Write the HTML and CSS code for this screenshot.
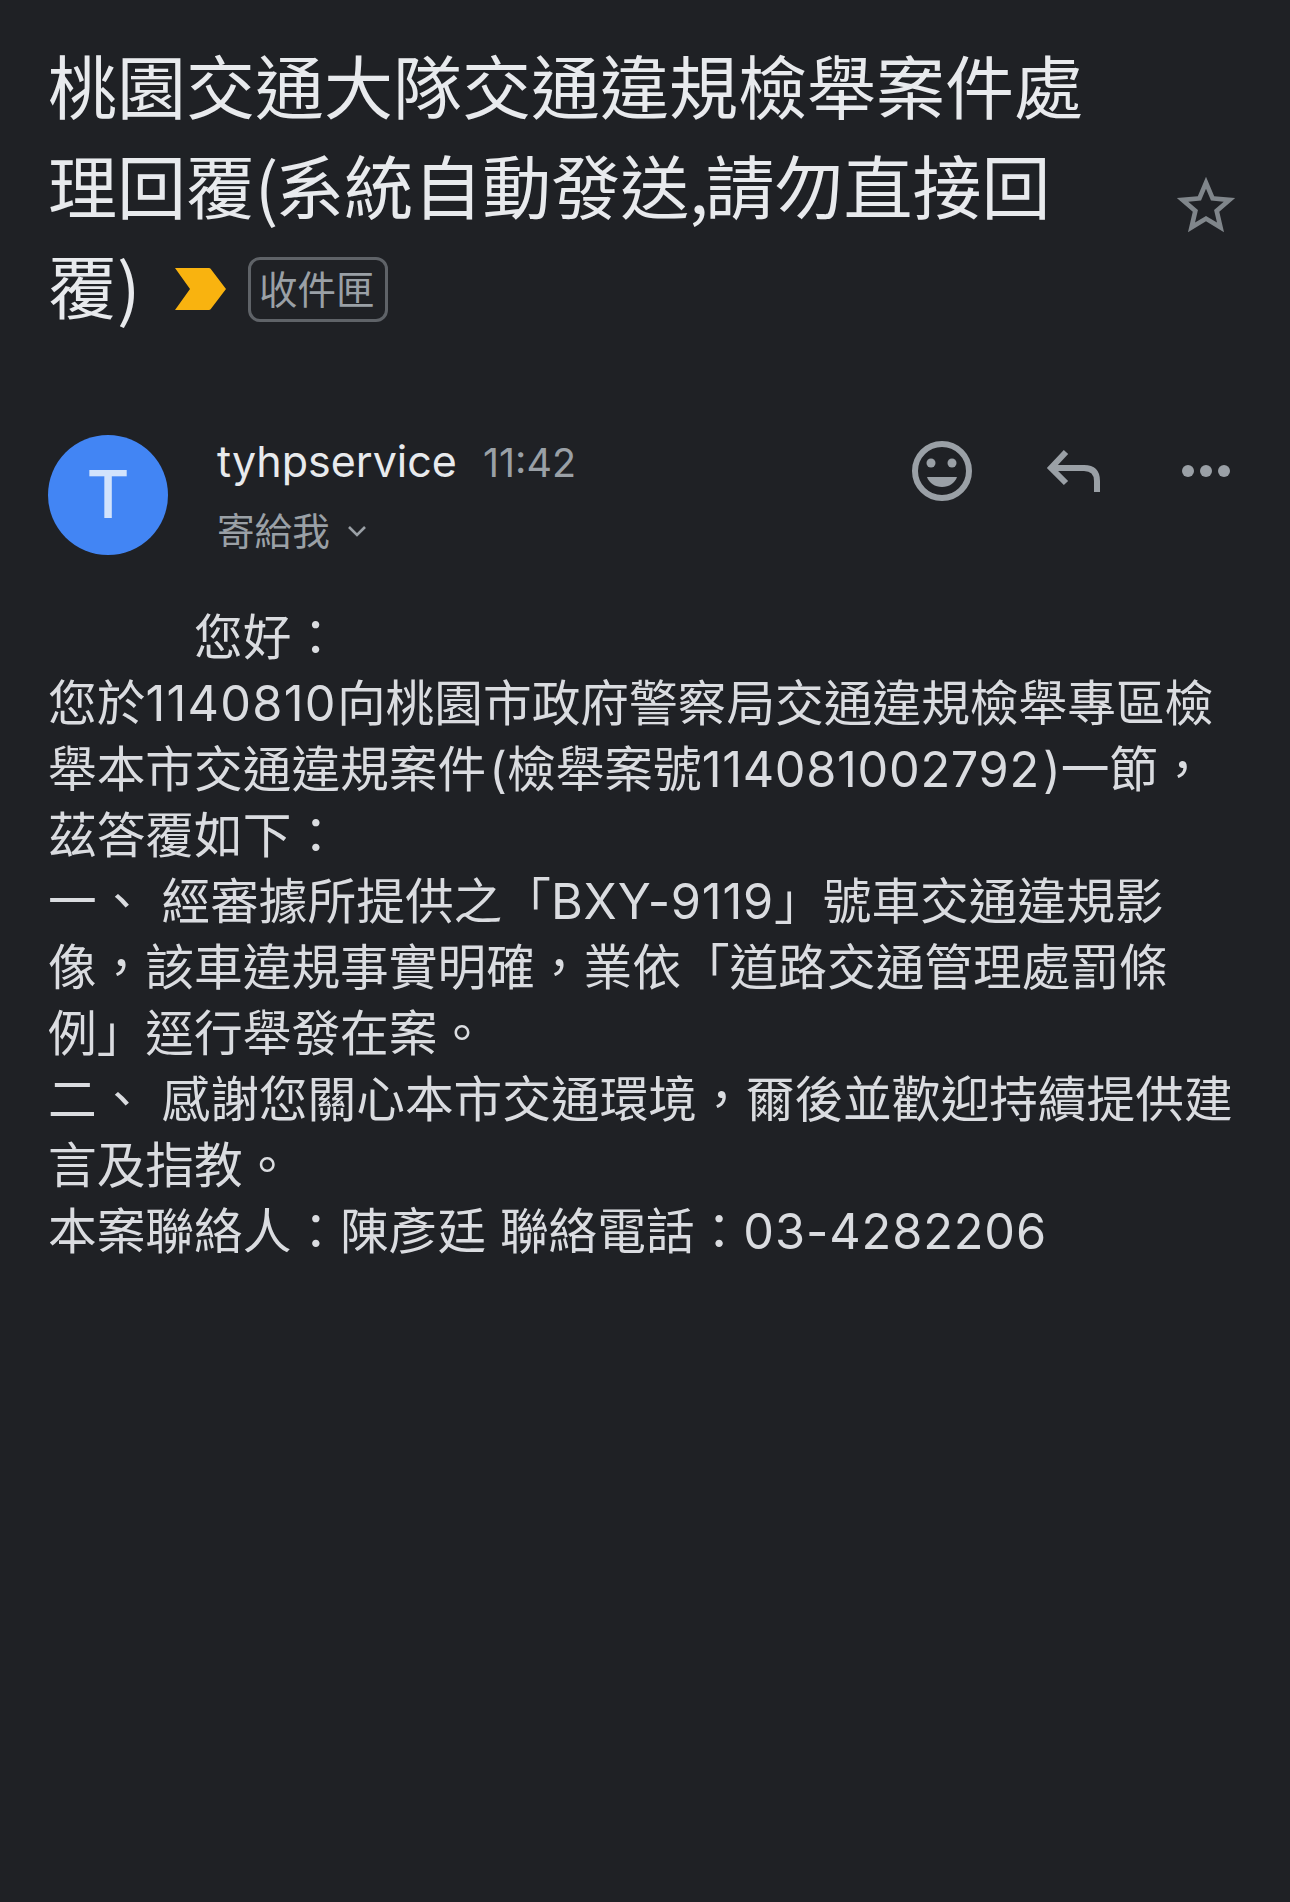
FILE: index.html
```html
<!DOCTYPE html>
<html lang="zh-Hant">
<head>
<meta charset="utf-8">
<title>桃園交通大隊交通違規檢舉案件處理回覆</title>
<link rel="stylesheet" href="styles.css">
</head>
<body>
<main class="mail">
  <header class="subject">
    <h1 class="subject-text">
      <span class="subject-line">桃園交通大隊交通違規檢舉案件處</span>
      <span class="subject-line">理回覆<span class="tight">(</span>系統自動發送<span class="tight">,</span>請勿直接回</span>
      <span class="subject-line subject-last">覆)
        <svg class="marker" width="51" height="42" viewBox="0 0 51 42"><path fill="#f9b30f" d="M0 0H34a2 2 0 0 1 1.6.8L51 21 35.6 41.2a2 2 0 0 1-1.6.8H0L15 21Z"/></svg>
        <span class="chip">收件匣</span>
      </span>
    </h1>
    <svg class="star" width="70" height="70" viewBox="0 0 24 24"><path fill="#80868b" d="M22 9.24l-7.19-.62L12 2 9.19 8.63 2 9.24l5.46 4.73L5.82 21 12 17.27 18.18 21l-1.63-7.03L22 9.24zM12 15.4l-3.76 2.27 1-4.28-3.32-2.88 4.38-.38L12 6.1l1.71 4.04 4.38.38-3.32 2.88 1 4.28L12 15.4z"/></svg>
  </header>

  <section class="sender">
    <div class="avatar">T</div>
    <div class="sender-info">
      <div class="sender-top"><span class="name">tyhpservice</span><span class="time">11:42</span></div>
      <div class="sender-to"><span>寄給我</span>
        <svg class="caret" width="20" height="12" viewBox="0 0 20 12"><path fill="none" stroke="#9aa0a6" stroke-width="2.6" d="M2 2l8 8 8-8"/></svg>
      </div>
    </div>
    <div class="actions">
      <svg width="72" height="72" viewBox="0 0 72 72"><circle cx="36" cy="36" r="27" fill="none" stroke="#9aa0a6" stroke-width="6"/><circle cx="25" cy="28" r="4.5" fill="#9aa0a6"/><circle cx="46" cy="28" r="4.5" fill="#9aa0a6"/><path fill="#9aa0a6" d="M21 42H51C49 48 43 52 36 52 29 52 23 48 21 42Z"/></svg>
      <svg width="72" height="72" viewBox="0 0 72 72"><path fill="none" stroke="#9aa0a6" stroke-width="6" d="M28 17L13 33 28 48M13 33H46Q59 33 59 46V57"/></svg>
      <svg width="72" height="72" viewBox="0 0 72 72"><circle cx="18" cy="36" r="6" fill="#9aa0a6"/><circle cx="36" cy="36" r="6" fill="#9aa0a6"/><circle cx="54" cy="36" r="6" fill="#9aa0a6"/></svg>
    </div>
  </section>

  <article class="body-text">
    <p class="greeting">您好：</p>
    <p>您於<span class="date-no">1140810</span>向桃園市政府警察局交通違規檢舉專區檢</p>
    <p>舉本市交通違規案件<span class="paren">(</span>檢舉案號<span class="case-no">114081002792</span><span class="paren">)</span>一節，</p>
    <p>茲答覆如下：</p>
    <p><span class="item-no">一、 </span>經審據所提供之「<span class="plate">BXY-9119</span>」號車交通違規影</p>
    <p>像，該車違規事實明確，業依「道路交通管理處罰條</p>
    <p>例」逕行舉發在案。</p>
    <p><span class="item-no">二、 </span>感謝您關心本市交通環境，爾後並歡迎持續提供建</p>
    <p>言及指教。</p>
    <p>本案聯絡人：陳彥廷 聯絡電話：<span class="phone">03-4282206</span></p>
  </article>
</main>
</body>
</html>
```

FILE: styles.css
```css
* { box-sizing: border-box; }

html, body {
  margin: 0;
  padding: 0;
  background: #1f2125;
}

body {
  font-family: Inter, "Noto Sans CJK TC", sans-serif;
}

.mail {
  height: 1902px;
  overflow: hidden;
  background: #1f2125;
}

.subject {
  display: flex;
  justify-content: space-between;
  padding: 34px 49px 0 48px;
}

.subject-text {
  margin: 0;
  font-size: 69px;
  font-weight: 400;
  line-height: 100px;
  color: #e8eaed;
  font-family: "Noto Sans CJK TC", sans-serif;
}

.subject-line {
  display: block;
  white-space: nowrap;
}

.tight {
  letter-spacing: -3px;
}

.subject-last {
  display: flex;
  align-items: center;
}

.marker {
  margin-left: 35px;
  margin-top: 10px;
}

.chip {
  margin-left: 22px;
  margin-top: 10px;
  width: 140px;
  height: 65px;
  border: 3px solid #5f6368;
  border-radius: 12px;
  padding-right: 3px;
  font-size: 38.5px;
  line-height: 54px;
  text-align: center;
  color: #9aa0a6;
}

.star {
  margin-top: 137px;
  flex: none;
}

.sender {
  display: flex;
  margin-top: 101px;
  padding: 0 48px;
}

.avatar {
  flex: none;
  width: 120px;
  height: 120px;
  border-radius: 50%;
  background: #4285f4;
  color: #d2e3fc;
  font-size: 66px;
  font-weight: 500;
  line-height: 118px;
  text-align: center;
}

.sender-info {
  margin-left: 49px;
  flex: 1;
}

.sender-top {
  display: flex;
  align-items: baseline;
  gap: 26px;
  margin-top: 1px;
  line-height: 50px;
}

.name {
  font-size: 43px;
  color: #e8eaed;
}

.time {
  font-size: 39.5px;
  color: #9aa0a6;
}

.sender-to {
  display: flex;
  align-items: center;
  gap: 17px;
  margin-top: 16px;
  font-size: 37.6px;
  line-height: 50px;
  color: #9aa0a6;
  font-family: "Noto Sans CJK TC", sans-serif;
}

.caret {
  margin-top: 4px;
}

.actions {
  display: flex;
  gap: 60px;
  align-items: flex-start;
}

.body-text {
  margin-top: 50px;
  padding: 0 48px;
  font-size: 48.7px;
  line-height: 66px;
  color: #dadce0;
}

.body-text p {
  margin: 0;
  white-space: nowrap;
}

.greeting {
  padding-left: 146px;
}

.date-no {
  letter-spacing: 1.3px;
}

.case-no {
  letter-spacing: .7px;
}

.paren {
  margin-left: 3px;
}

.item-no {
  letter-spacing: .8px;
}

.plate {
  letter-spacing: .8px;
}

.phone {
  letter-spacing: .9px;
}
```
